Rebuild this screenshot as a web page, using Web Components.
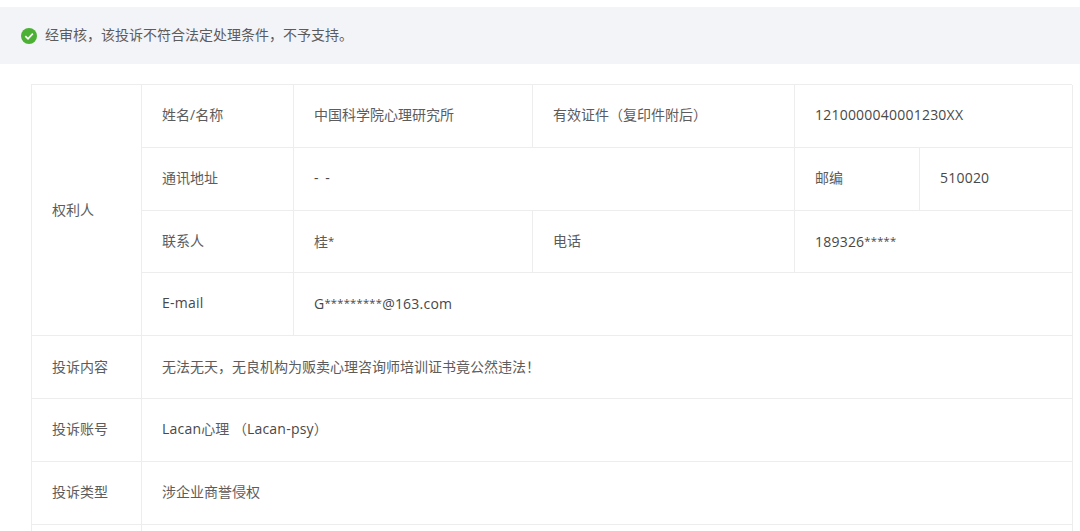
<!DOCTYPE html>
<html lang="zh">
<head>
<meta charset="utf-8">
<title>投诉详情</title>
<style>
	html, body { margin: 0; height: 531px; overflow: hidden; background: #fff; }
	body { font: 14px/20px "Open Sans", "Noto Sans CJK SC", sans-serif; color: #5c5c5c; }
</style>
</head>
<body>
<notice-bar>经审核，该投诉不符合法定处理条件，不予支持。</notice-bar>
<info-table>
	<info-cell style="grid-row: span 4; padding-top: 115px">权利人</info-cell>
	<info-cell>姓名/名称</info-cell>
	<info-cell>中国科学院心理研究所</info-cell>
	<info-cell>有效证件（复印件附后）</info-cell>
	<info-cell style="grid-column: span 2"><latin-text>1210000040001230XX</latin-text></info-cell>

	<info-cell>通讯地址</info-cell>
	<info-cell style="grid-column: span 2"><latin-text gap="1.5">- -</latin-text></info-cell>
	<info-cell>邮编</info-cell>
	<info-cell><latin-text>510020</latin-text></info-cell>

	<info-cell>联系人</info-cell>
	<info-cell>桂<mask-stars>*</mask-stars></info-cell>
	<info-cell>电话</info-cell>
	<info-cell style="grid-column: span 2"><latin-text>189326</latin-text><mask-stars>*****</mask-stars></info-cell>

	<info-cell><latin-text>E-mail</latin-text></info-cell>
	<info-cell style="grid-column: span 4"><latin-text>G</latin-text><mask-stars>*********</mask-stars><latin-text>@163.com</latin-text></info-cell>

	<info-cell style="padding-top: 21px">投诉内容</info-cell>
	<info-cell style="grid-column: span 5; padding-top: 21px">无法无天，无良机构为贩卖心理咨询师培训证书竟公然违法！</info-cell>

	<info-cell>投诉账号</info-cell>
	<info-cell style="grid-column: span 5"><latin-text>Lacan</latin-text>心理 （<latin-text>Lacan-psy</latin-text>）</info-cell>

	<info-cell>投诉类型</info-cell>
	<info-cell style="grid-column: span 5">涉企业商誉侵权</info-cell>

	<info-cell></info-cell>
	<info-cell style="grid-column: span 5"></info-cell>
</info-table>

<script>
class NoticeBar extends HTMLElement {
	constructor() {
		super();
		this.attachShadow({ mode: "open" }).innerHTML = `
			<style>
				:host { display: flex; align-items: center; gap: 8px; height: 57px; margin-top: 7px; padding-left: 21px; background: #f3f4f8; box-sizing: border-box; padding-bottom: 1px; }
				svg { flex: none; display: block; margin-top: 1px; }
			</style>
			<svg width="16" height="16" viewBox="0 0 16 16">
				<circle cx="8" cy="8" r="8" fill="#4bb033"/>
				<path d="M4.3 8.2 7 10.8 11.8 5.6" fill="none" stroke="#fff" stroke-width="1.7"/>
			</svg>
			<slot></slot>
		`;
	}
}

class InfoTable extends HTMLElement {
	constructor() {
		super();
		this.attachShadow({ mode: "open" }).innerHTML = `
			<style>
				:host {
					display: grid;
					grid-template-columns: 110px 152px 239px 262px 125px 153px;
					grid-auto-rows: 62.8px;
					width: 1041px;
					margin: 20px 0 0 31px;
					border-top: 1px solid #ededed;
					border-left: 1px solid #ededed;
					box-sizing: border-box;
				}
			</style>
			<slot></slot>
		`;
	}
}

class InfoCell extends HTMLElement {
	constructor() {
		super();
		this.attachShadow({ mode: "open" }).innerHTML = `
			<style>
				:host {
					display: block;
					padding: 20px 0 0 20px;
					box-sizing: border-box;
					min-width: 0;
					white-space: nowrap;
					border-right: 1px solid #ededed;
					border-bottom: 1px solid #ededed;
				}
			</style><slot></slot>`;
	}
}

// Latin runs sit a little wider and darker than the CJK text around them.
// No whitespace in these two shadow roots: they are inline, it would show as a space.
class LatinText extends HTMLElement {
	constructor() {
		super();
		this.attachShadow({ mode: "open" }).innerHTML =
			`<style>:host { display: inline; color: #484848; letter-spacing: var(--gap, 0.22px); }</style><slot></slot>`;
	}

	connectedCallback() {
		if (this.hasAttribute("gap")) {
			this.style.setProperty("--gap", this.getAttribute("gap") + "px");
		}
	}
}

class MaskStars extends HTMLElement {
	constructor() {
		super();
		this.attachShadow({ mode: "open" }).innerHTML =
			`<style>:host { display: inline; font-size: 11.2px; letter-spacing: 0.25px; vertical-align: 1.5px; color: #484848; }</style><slot></slot>`;
	}
}

customElements.define("notice-bar", NoticeBar);
customElements.define("info-table", InfoTable);
customElements.define("info-cell", InfoCell);
customElements.define("latin-text", LatinText);
customElements.define("mask-stars", MaskStars);
</script>
</body>
</html>
